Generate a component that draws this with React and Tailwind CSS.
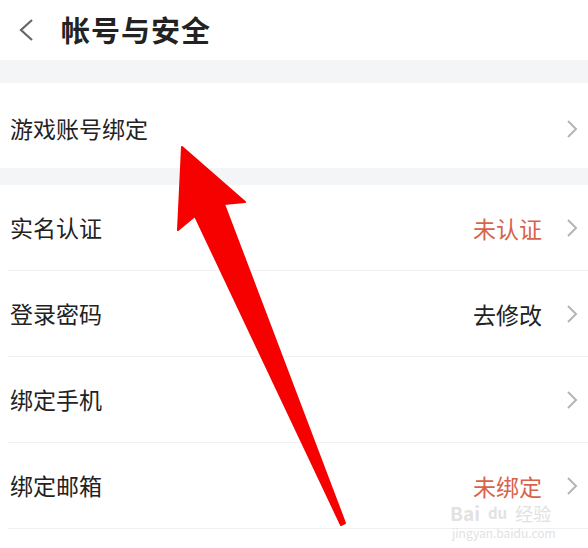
import React from 'react';

const font = { fontFamily: '"Noto Sans CJK SC", "Noto Sans", sans-serif' };

const Chevron = () => (
  <svg width="12" height="20" viewBox="0 0 12 20" className="shrink-0">
    <path d="M2 2 L10 10 L2 18" fill="none" stroke="#b5b5b5" strokeWidth="2" />
  </svg>
);

const Row = ({ label, value, accent, last }) => (
  <div className={`flex items-center h-[86px] ml-2 pr-[10px] ${last ? '' : 'border-b border-[#f0f0f0]'}`}>
    <span className="flex-1 pl-[2px] text-[23px] text-[#222]">{label}</span>
    {value && <span className={`text-[23px] leading-[26px] mr-[24px] ${accent ? 'text-[#d8634a]' : 'text-[#222]'}`}>{value}</span>}
    <Chevron />
  </div>
);

const App = () => {
  const rows = [
    { label: '实名认证', value: '未认证', accent: true },
    { label: '登录密码', value: '去修改' },
    { label: '绑定手机' },
    { label: '绑定邮箱', value: '未绑定', accent: true },
  ];

  return (
    <div className="relative w-[588px] h-[548px] bg-white overflow-hidden" style={font}>
      <div className="flex items-center h-[60px] pl-[18px]">
        <svg width="16" height="24" viewBox="0 0 16 24">
          <path d="M14 2 L3 12 L14 22" fill="none" stroke="#666" strokeWidth="2.2" />
        </svg>
        <h1 className="ml-[27px] text-[29px] font-bold text-[#222] tracking-[1px]">帐号与安全</h1>
      </div>

      <div className="h-[23px] bg-[#f4f5f7]" />

      <div className="flex items-center h-[85px] pl-[10px] pr-[10px] pt-[6px]">
        <span className="flex-1 text-[23px] text-[#222]">游戏账号绑定</span>
        <Chevron />
      </div>

      <div className="h-[17px] bg-[#f4f5f7]" />

      <div>
        {rows.map(r => <Row key={r.label} {...r} />)}
      </div>

      {/* watermark */}
      <div className="absolute left-[450px] top-[504px] flex items-end gap-2 text-[#e2e2e2] leading-[18px] h-[18px]">
        <span className="text-[19px] font-bold">Bai</span>
        <span className="text-[15px] font-bold">du</span>
        <span className="text-[18px]">经验</span>
      </div>
      <div className="absolute left-[452px] top-[527px] text-[12px] text-[#e2e2e2] leading-none">jingyan.baidu.com</div>

      {/* annotation arrow */}
      <svg className="absolute inset-0 pointer-events-none" width="588" height="548">
        <polygon
          points="182,147 245,202 224,204 345,523 341,525 195,216 178,230"
          fill="#f60000"
          stroke="#f60000"
          strokeWidth="2"
          strokeLinejoin="round"
        />
      </svg>
    </div>
  );
};

export default App;
